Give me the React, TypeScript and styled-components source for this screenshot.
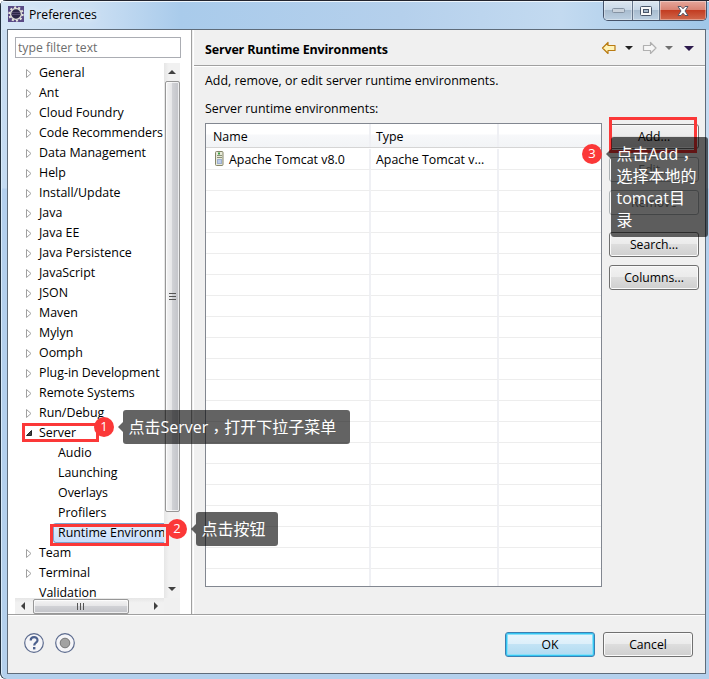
import React from "react";
import styled, { createGlobalStyle, css } from "styled-components";

const GlobalStyle = createGlobalStyle`
  * { box-sizing: border-box; }
  body { margin: 0; overflow: hidden; }
  body, button, input { font: 12.4px/20px "Open Sans", "Noto Sans CJK SC", sans-serif; color: #000; }
`;

const Window = styled.div`
  position: relative;
  width: 709px;
  height: 679px;
  padding: 0 3px 5px 7px;
  display: flex;
  flex-direction: column;
  background: linear-gradient(#c9dcf0 0, #c4dbf2 188px, #b4d0ee 189px, #b4d0ec 100%);
  box-shadow: inset 0 1px #22242e, inset 1px 0 #22303e, inset 2px 0 #d9ebfa;
  border-radius: 6px 0 0 6px;
  overflow: hidden;
`;

const TitleBar = styled.header`
  height: 29px;
  margin: 1px -3px -1px -6px;
  flex: none;
  display: flex;
  align-items: flex-start;
  padding: 5px 2px 0 7px;
  background: linear-gradient(90deg, #d5e6f6 0, #cbdff3 90px, #a9cbeb 180px, #b5d0ec 400px, #c3daf0 560px, #9fc6e8 100%);
  box-shadow: inset 0 1px #edf5fc;
`;

const Title = styled.h1`
  margin: -1px 0 0 5px;
  font-size: 12.2px;
  line-height: 20px;
  font-weight: 400;
  text-shadow: 0 0 6px #fff;
  flex: 1;
`;

const Controls = styled.div`
  display: flex;
  height: 20px;
  margin-top: -5px;
  border: 1px solid #46536a;
  border-top: 0;
  border-radius: 0 0 5px 5px;
  overflow: hidden;
`;

const Control = styled.button<{ $w: number; $close?: boolean }>`
  width: ${(p) => p.$w}px;
  padding: 0;
  border: 0;
  border-left: ${(p) => (p.$w === 28 ? 0 : 1)}px solid #66758a;
  background: ${(p) =>
    p.$close
      ? "linear-gradient(#e5a79c 0, #d98474 45%, #c33d22 50%, #d0684c 100%)"
      : "linear-gradient(#dce6f0 0, #c9d8e7 45%, #a8bccf 50%, #bdd0e2 100%)"};
  box-shadow: inset 0 0 0 1px rgba(255, 255, 255, 0.35);
  display: flex;
  align-items: center;
  justify-content: center;
`;

const Client = styled.main`
  flex: 1;
  min-height: 0;
  border: 1px solid #5f6c7a;
  background: #f0f0f0;
  display: flex;
  flex-direction: column;
`;

const Upper = styled.div`
  height: 584px;
  display: flex;
  flex: none;
`;

const Sidebar = styled.aside`
  width: 184px;
  background: #fff;
  border-right: 1px solid #a0a0a0;
  padding: 7px 10px 0 7px;
  display: flex;
  flex-direction: column;
`;

const Filter = styled.input`
  width: 166px;
  height: 21px;
  padding: 0 2px;
  border: 1px solid #abadb3;
  background: #fff;
  flex: none;
  outline: 0;
  font-size: 12.2px;
  &::placeholder { color: #6d6d6d; opacity: 1; }
`;

const TreeArea = styled.div`
  margin-top: 5px;
  display: grid;
  grid-template-columns: 149px 17px;
  grid-template-rows: 535px 16px;
`;

const Tree = styled.ul`
  margin: 0;
  padding: 0;
  list-style: none;
  overflow: hidden;
`;

const TreeRow = styled.li<{ $child?: boolean; $on?: boolean }>`
  height: 20px;
  display: flex;
  align-items: center;
  white-space: nowrap;
  padding-left: ${(p) => (p.$child ? 43 : 9)}px;
  gap: 5px;
  ${(p) =>
    p.$on &&
    css`
      margin-left: 38px;
      padding-left: 4px;
      border: 1px solid #7da2ce;
      border-right: 0;
      border-radius: 3px 0 0 3px;
      background: linear-gradient(#e3effd, #c8defb);
    `}
`;

const Arrow = styled.svg`
  width: 10px;
  height: 10px;
  flex: none;
`;

const ScrollV = styled.div`
  display: flex;
  flex-direction: column;
  align-items: center;
  margin-right: 1px;
  background: linear-gradient(90deg, #e6e6e6, #f1f1f1 30%, #f1f1f1);
`;

const ScrollH = styled.div`
  display: flex;
  align-items: center;
  background: linear-gradient(#e6e6e6, #f1f1f1 30%, #f1f1f1);
`;

const Corner = styled.div`
  margin-right: 1px;
  background: #f0f0f0;
`;

const Slot = styled.span`
  width: 18px;
  height: 18px;
  display: flex;
  align-items: center;
  justify-content: center;
  flex: none;
`;

const Thumb = styled.div<{ $v?: boolean }>`
  display: flex;
  align-items: center;
  justify-content: center;
  border: 1px solid #979797;
  border-radius: 2px;
  box-shadow: inset 0 0 0 1px rgba(255, 255, 255, 0.7);
  ${(p) =>
    p.$v
      ? "width:15px;height:431px;background:linear-gradient(90deg,#f4f4f4,#e6e6e8 45%,#d0d1d5 50%,#c2c3c8);"
      : "width:96px;height:15px;background:linear-gradient(#f4f4f4,#e6e6e8 45%,#d0d1d5 50%,#c2c3c8);"}
`;

const Spacer = styled.div`
  flex: 1;
`;

const Content = styled.section`
  flex: 1;
  margin-left: 1px;
  border-left: 1px solid #fff;
  display: flex;
  flex-direction: column;
`;

const PageHead = styled.div`
  height: 36px;
  flex: none;
  border-bottom: 1px solid #a0a0a0;
  box-shadow: 0 1px #fff;
  display: flex;
  align-items: center;
  padding: 1px 10px 0 11px;
`;

const PageTitle = styled.h2`
  margin: 3px 0 0;
  flex: 1;
  font-size: 12.5px;
  font-weight: 700;
  letter-spacing: -0.17px;
`;

const Nav = styled.svg`
  width: 94px;
  height: 14px;
`;

const Body = styled.div`
  padding: 5px 0 0 11px;
`;

const Line = styled.p`
  margin: 0 0 8px;
  height: 20px;
  white-space: nowrap;
`;

const TableArea = styled.div`
  display: flex;
  gap: 7px;
  margin-top: -4px;
`;

const Table = styled.div`
  width: 397px;
  height: 464px;
  border: 1px solid #828790;
  background: #fff;
`;

const HeadRow = styled.div`
  height: 24px;
  display: grid;
  grid-template-columns: 164.5px 128px 1fr;
  border-bottom: 1px solid #d5d5d5;
  background: linear-gradient(#fff 0, #fff 10px, #f7f8fa 11px, #f2f4f6 100%);
`;

const Cells = styled.div`
  height: 438px;
  padding-top: 1px;
  display: grid;
  grid-template-columns: 164.5px 128px 1fr;
  grid-auto-rows: 21px;
  overflow: hidden;
`;

const Cell = styled.div<{ $first?: boolean; $head?: boolean }>`
  border-right: 2px solid #eff0f4;
  border-bottom: ${(p) => (p.$head ? 0 : 1)}px solid #ededed;
  display: flex;
  align-items: center;
  white-space: nowrap;
  padding: ${(p) => (p.$head ? 3 : 2)}px 0 0 ${(p) => (p.$first ? 7 : 5.5)}px;
  &:nth-child(3n) { border-right: 0; }
`;

const ServerGlyph = styled.svg`
  width: 9px;
  height: 15px;
  margin: -4px 5px 0 2px;
`;

const Buttons = styled.div`
  display: flex;
  flex-direction: column;
  gap: 8px;
  padding-top: 1px;
`;

const PushButton = styled.button<{ $gap?: boolean; $off?: boolean; $primary?: boolean }>`
  width: 90px;
  height: 25px;
  padding: 1px 0 0;
  margin-top: ${(p) => (p.$gap ? 9 : 0)}px;
  border: 1px solid #707070;
  border-radius: 3px;
  background: linear-gradient(#f2f2f2 0, #ebebeb 48%, #dddddd 50%, #cfcfcf 100%);
  box-shadow: inset 0 0 0 1px #fafafa;
  font-size: 12.2px;
  ${(p) =>
    p.$off &&
    css`
      border-color: #adb2b5;
      background: #f4f4f4;
      color: #838383;
    `}
  ${(p) =>
    p.$primary &&
    css`
      border-color: #3c7fb1;
      background: linear-gradient(#eaf5fb 0, #dceffa 48%, #c2e3f5 50%, #b0daf1 100%);
      box-shadow: inset 0 0 0 1px #34c5f2, inset 0 0 0 2px #8adff8;
    `}
`;

const Footer = styled.footer`
  flex: 1;
  border-top: 1px solid #a0a0a0;
  box-shadow: inset 0 1px #fff;
  display: flex;
  align-items: flex-start;
  padding: 17px 12px 0 15px;
  gap: 8px;
`;

const HelpIcons = styled.svg`
  width: 54px;
  height: 24px;
`;

const RedBox = styled.div<{ $x: number; $y: number; $w: number; $h: number }>`
  position: absolute;
  left: ${(p) => p.$x}px;
  top: ${(p) => p.$y}px;
  width: ${(p) => p.$w}px;
  height: ${(p) => p.$h}px;
  border: 3px solid #fb3838;
`;

const Badge = styled.div<{ $x: number; $y: number }>`
  position: absolute;
  left: ${(p) => p.$x}px;
  top: ${(p) => p.$y}px;
  width: 20px;
  height: 20px;
  border-radius: 50%;
  background: #fb3838;
  color: #fff;
  font-size: 13px;
  line-height: 19px;
  text-align: center;
`;

const Tip = styled.div<{ $x: number; $y: number; $w: number; $h: number }>`
  position: absolute;
  left: ${(p) => p.$x}px;
  top: ${(p) => p.$y}px;
  width: ${(p) => p.$w}px;
  height: ${(p) => p.$h}px;
  padding: 6px 0 0 5.5px;
  border-radius: 3px;
  background: rgba(0, 0, 0, 0.61);
  color: #fff;
  font-size: 16px;
  line-height: 22px;
  white-space: nowrap;
  &::before {
    content: "";
    position: absolute;
    right: 100%;
    top: 12px;
    border: 5px solid transparent;
    border-left: 0;
    border-right-color: rgba(0, 0, 0, 0.61);
  }
`;

const TipLine = styled.div`
  height: 22px;
`;

const Comma = styled.span`
  font-family: "Noto Sans CJK TC", sans-serif;
  line-height: 1;
  vertical-align: -4px;
`;

type Item = { label: string; kind?: "child" | "open" | "leaf"; on?: boolean };

const items: Item[] = [
  { label: "General" },
  { label: "Ant" },
  { label: "Cloud Foundry" },
  { label: "Code Recommenders" },
  { label: "Data Management" },
  { label: "Help" },
  { label: "Install/Update" },
  { label: "Java" },
  { label: "Java EE" },
  { label: "Java Persistence" },
  { label: "JavaScript" },
  { label: "JSON" },
  { label: "Maven" },
  { label: "Mylyn" },
  { label: "Oomph" },
  { label: "Plug-in Development" },
  { label: "Remote Systems" },
  { label: "Run/Debug" },
  { label: "Server", kind: "open" },
  { label: "Audio", kind: "child" },
  { label: "Launching", kind: "child" },
  { label: "Overlays", kind: "child" },
  { label: "Profilers", kind: "child" },
  { label: "Runtime Environm", kind: "child", on: true },
  { label: "Team" },
  { label: "Terminal" },
  { label: "Validation", kind: "leaf" },
];

const TreeArrow = ({ kind }: { kind?: Item["kind"] }) => (
  <Arrow viewBox="0 0 10 10">
    {kind === "open" && <path d="M7.5 2.5v5h-5z" fill="#404040" stroke="#262626" />}
    {!kind && <path d="M2.5 1.5v8l4.5-4z" fill="#fff" stroke="#a0a0a0" />}
  </Arrow>
);

const Tri = ({ d }: { d: string }) => (
  <svg width="8" height="8" viewBox="0 0 8 8">
    <path d={d} fill="#404040" />
  </svg>
);

const EclipseIcon = () => (
  <svg width="16" height="16" viewBox="0 0 16 16">
    <rect width="16" height="16" fill="#594a85" />
    <circle cx="8" cy="8" r="6.7" fill="none" stroke="#e6e4dc" strokeWidth="2" strokeDasharray="2.1 2.1" />
    <circle cx="8" cy="8" r="5.4" fill="#2b2546" stroke="#d8d8d4" strokeWidth="1.5" />
    <path d="M4 6.5h8M3.5 8.5h9" stroke="#54496f" />
  </svg>
);

export default function App() {
  return (
    <>
      <GlobalStyle />
      <Window>
        <TitleBar>
          <EclipseIcon />
          <Title>Preferences</Title>
          <Controls>
            <Control $w={28} aria-label="Minimize">
              <svg width="13" height="5">
                <rect x=".5" y=".5" width="12" height="4" rx="1" fill="#c9d2dc" stroke="#8593a3" />
              </svg>
            </Control>
            <Control $w={27} aria-label="Maximize">
              <svg width="12" height="10">
                <rect x=".5" y=".5" width="11" height="9" rx="1" fill="#f8f8f8" stroke="#49566a" />
                <rect x="3.5" y="3.5" width="5" height="3" fill="#a5b7ca" stroke="#49566a" />
              </svg>
            </Control>
            <Control $w={47} $close aria-label="Close">
              <svg width="12" height="10" viewBox="0 0 12 10">
                <path d="M1 .5h3l2 2.3L8 .5h3L8 5l3 4.5H8L6 7.2 4 9.5H1L4 5z" fill="#fff" stroke="#535666" />
              </svg>
            </Control>
          </Controls>
        </TitleBar>
        <Client>
          <Upper>
            <Sidebar>
              <Filter placeholder="type filter text" />
              <TreeArea>
                <Tree>
                  {items.map((it) => (
                    <TreeRow key={it.label} $child={it.kind === "child"} $on={it.on}>
                      {it.kind !== "child" && <TreeArrow kind={it.kind} />}
                      <span>{it.label}</span>
                    </TreeRow>
                  ))}
                </Tree>
                <ScrollV>
                  <Slot><Tri d="M0 6l4-4 4 4z" /></Slot>
                  <Thumb $v>
                    <svg width="7" height="8"><path d="M0 .5h7M0 3.5h7M0 6.5h7" stroke="#555" /></svg>
                  </Thumb>
                  <Spacer />
                  <Slot><Tri d="M0 2l4 4 4-4z" /></Slot>
                </ScrollV>
                <ScrollH>
                  <Slot><Tri d="M5 0L1 4l4 4z" /></Slot>
                  <Thumb>
                    <svg width="8" height="7"><path d="M.5 0v7M3.5 0v7M6.5 0v7" stroke="#555" /></svg>
                  </Thumb>
                  <Spacer />
                  <Slot><Tri d="M3 0l4 4-4 4z" /></Slot>
                </ScrollH>
                <Corner />
              </TreeArea>
            </Sidebar>
            <Content>
              <PageHead>
                <PageTitle>Server Runtime Environments</PageTitle>
                <Nav viewBox="0 0 94 14">
                  <path d="M1.5 7l5.5-5.5v3h7v5H7v3z" fill="#fff3b8" stroke="#b97b12" strokeWidth="1.2" strokeLinejoin="round" />
                  <path d="M24 5h8l-4 4z" fill="#222" />
                  <path d="M55 7l-5.5-5.5v3h-7v5h7v3z" fill="#f6f6f6" stroke="#b0b0b0" strokeWidth="1.2" strokeLinejoin="round" />
                  <path d="M64 5h8l-4 4z" fill="#707070" />
                  <path d="M83 5h10l-5 5z" fill="#2c1a4c" />
                </Nav>
              </PageHead>
              <Body>
                <Line>Add, remove, or edit server runtime environments.</Line>
                <Line>Server runtime environments:</Line>
                <TableArea>
                  <Table>
                    <HeadRow>
                      <Cell $head $first>Name</Cell>
                      <Cell $head>Type</Cell>
                      <Cell $head />
                    </HeadRow>
                    <Cells>
                      <Cell $first>
                        <ServerGlyph viewBox="0 0 9 15">
                          <rect x=".5" y=".5" width="7.5" height="14" rx="1" fill="#e8ead8" stroke="#85856a" />
                          <path d="M2 4.5h5M2 6.5h5" stroke="#8a9078" />
                          <rect x="3" y="1.5" width="2" height="2" fill="#3d9c48" />
                          <rect x="2.5" y="8.5" width="4" height="4" fill="#bccbe8" stroke="#9daecd" />
                        </ServerGlyph>
                        Apache Tomcat v8.0
                      </Cell>
                      <Cell>Apache Tomcat v...</Cell>
                      <Cell />
                      {Array.from({ length: 60 }, (_, i) => <Cell key={i} />)}
                    </Cells>
                  </Table>
                  <Buttons>
                    <PushButton>Add...</PushButton>
                    <PushButton $off>Edit...</PushButton>
                    <PushButton $off>Remove</PushButton>
                    <PushButton $gap>Search...</PushButton>
                    <PushButton>Columns...</PushButton>
                  </Buttons>
                </TableArea>
              </Body>
            </Content>
          </Upper>
          <Footer>
            <HelpIcons viewBox="0 0 54 24">
              <circle cx="11" cy="11" r="9.3" fill="#f5f5f8" stroke="#5c6b8e" strokeWidth="1.2" />
              <path d="M7.7 8.5c0-4.5 6.8-4.3 6.8-.3 0 2.5-3.3 2.4-3.3 5.3" fill="none" stroke="#4c608e" strokeWidth="2.2" />
              <rect x="10" y="15" width="2.4" height="2.4" fill="#4c608e" />
              <circle cx="42" cy="11" r="9.3" fill="#f5f5f8" stroke="#5c6b8e" strokeWidth="1.2" />
              <circle cx="42" cy="11" r="4.8" fill="#a2a2a2" stroke="#777" />
            </HelpIcons>
            <Spacer />
            <PushButton $primary>OK</PushButton>
            <PushButton>Cancel</PushButton>
          </Footer>
        </Client>

        <RedBox $x={22} $y={423} $w={77} $h={19} />
        <RedBox $x={50} $y={524} $w={119} $h={22} />
        <RedBox $x={609} $y={117} $w={88} $h={36} />
        <Badge $x={94} $y={417}>1</Badge>
        <Badge $x={167} $y={519}>2</Badge>
        <Badge $x={582} $y={144}>3</Badge>
        <Tip $x={123} $y={410} $w={227} $h={34}>
          <TipLine>点击Server<Comma>，</Comma>打开下拉子菜单</TipLine>
        </Tip>
        <Tip $x={196} $y={512} $w={82} $h={34}>
          <TipLine>点击按钮</TipLine>
        </Tip>
        <Tip $x={611} $y={137} $w={97} $h={100}>
          <TipLine>点击Add<Comma>，</Comma></TipLine>
          <TipLine>选择本地的</TipLine>
          <TipLine>tomcat目</TipLine>
          <TipLine>录</TipLine>
        </Tip>
      </Window>
    </>
  );
}
